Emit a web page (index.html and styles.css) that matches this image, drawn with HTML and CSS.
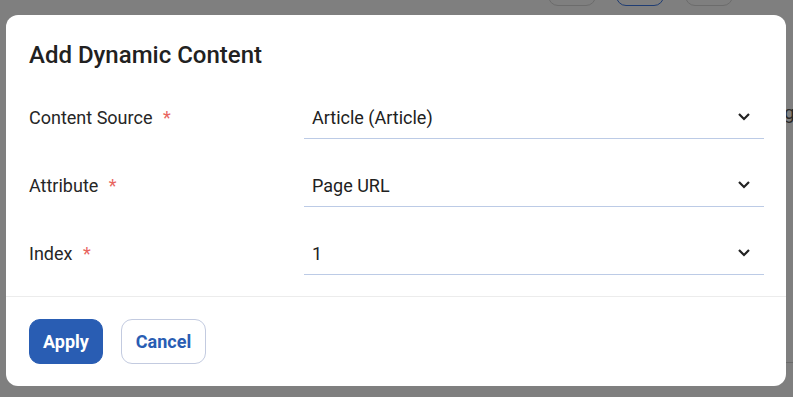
FILE: index.html
```html
<!DOCTYPE html>
<html>
<head>
<meta charset="utf-8">
<link rel="stylesheet" href="styles.css">
</head>
<body>
<div class="behind">
  <span class="ghost-btn g1"></span>
  <span class="ghost-btn g2"></span>
  <span class="ghost-btn g3"></span>
  <span class="ghost-text">g</span>
  <span class="ghost-line"></span>
</div>
<div class="dialog">
  <h1 class="title">Add Dynamic Content</h1>
  <div class="form">
    <div class="label">Content Source <span class="req">*</span></div>
    <div class="field"><span>Article (Article)</span><svg class="chev" width="14" height="9" viewBox="0 0 14 9"><path d="M2 2 L7 7 L12 2" fill="none" stroke="#222" stroke-width="2.2"/></svg></div>
    <div class="label">Attribute <span class="req">*</span></div>
    <div class="field"><span>Page URL</span><svg class="chev" width="14" height="9" viewBox="0 0 14 9"><path d="M2 2 L7 7 L12 2" fill="none" stroke="#222" stroke-width="2.2"/></svg></div>
    <div class="label">Index <span class="req">*</span></div>
    <div class="field"><span>1</span><svg class="chev" width="14" height="9" viewBox="0 0 14 9"><path d="M2 2 L7 7 L12 2" fill="none" stroke="#222" stroke-width="2.2"/></svg></div>
  </div>
  <div class="footer">
    <button class="btn primary">Apply</button>
    <button class="btn secondary">Cancel</button>
  </div>
</div>
</body>
</html>
```
FILE: styles.css
```css
html, body {
  margin: 0;
  padding: 0;
}
body {
  background: #7f7f7f;
  width: 793px;
  height: 397px;
  overflow: hidden;
  position: relative;
  font-family: Roboto, "Liberation Sans", sans-serif;
  color: #212121;
}
.behind {
  position: absolute;
  inset: 0;
}
.ghost-btn {
  position: absolute;
  top: -20px;
  height: 24px;
  width: 46px;
  border: 1px solid #6c6c6c;
  border-radius: 10px;
}
.g1 { left: 548px; }
.g2 { left: 616px; border-color: #1f3d73; }
.g3 { left: 685px; }
.ghost-text {
  position: absolute;
  left: 784px;
  top: 101px;
  font-size: 19px;
  line-height: 24px;
  color: #2a2a2a;
}
.ghost-line {
  position: absolute;
  left: 786px;
  top: 362px;
  width: 10px;
  height: 1px;
  background: #6a6a6a;
}
.dialog {
  position: relative;
  margin: 15px 0 0 6px;
  width: 780px;
  height: 371px;
  box-sizing: border-box;
  background: #fff;
  border-radius: 12px;
  display: flex;
  flex-direction: column;
}
.title {
  margin: 0;
  padding: 26px 23px 0;
  font-size: 24px;
  line-height: 28px;
  font-weight: 500;
  color: #212121;
}
.form {
  display: grid;
  grid-template-columns: 275px 460px;
  row-gap: 23px;
  padding: 25px 22px 0 23px;
}
.label, .field {
  font-size: 18px;
  line-height: 20px;
  padding: 14px 0 10px;
  height: 20px;
}
.label {
  color: #262626;
  border-bottom: 1px solid transparent;
}
.req {
  color: #e8655f;
  margin-left: 6px;
}
.field {
  display: flex;
  align-items: center;
  justify-content: space-between;
  padding-left: 8px;
  padding-right: 13px;
  border-bottom: 1px solid #bccbe6;
  color: #212121;
}
.chev {
  display: block;
  margin-top: -3px;
}
.footer {
  margin-top: 21px;
  border-top: 1px solid #ececec;
  padding: 22px 23px 0;
  display: flex;
  gap: 18px;
}
.btn {
  font-family: Roboto, "Liberation Sans", sans-serif;
  font-size: 18px;
  font-weight: 700;
  height: 45px;
  border-radius: 11px;
  padding: 0;
  box-sizing: border-box;
  cursor: pointer;
}
.primary {
  background: #295db3;
  color: #fff;
  border: 1px solid #295db3;
  width: 74px;
}
.secondary {
  background: #fff;
  color: #295db3;
  border: 1px solid #c3cbe0;
  width: 85px;
}
```
